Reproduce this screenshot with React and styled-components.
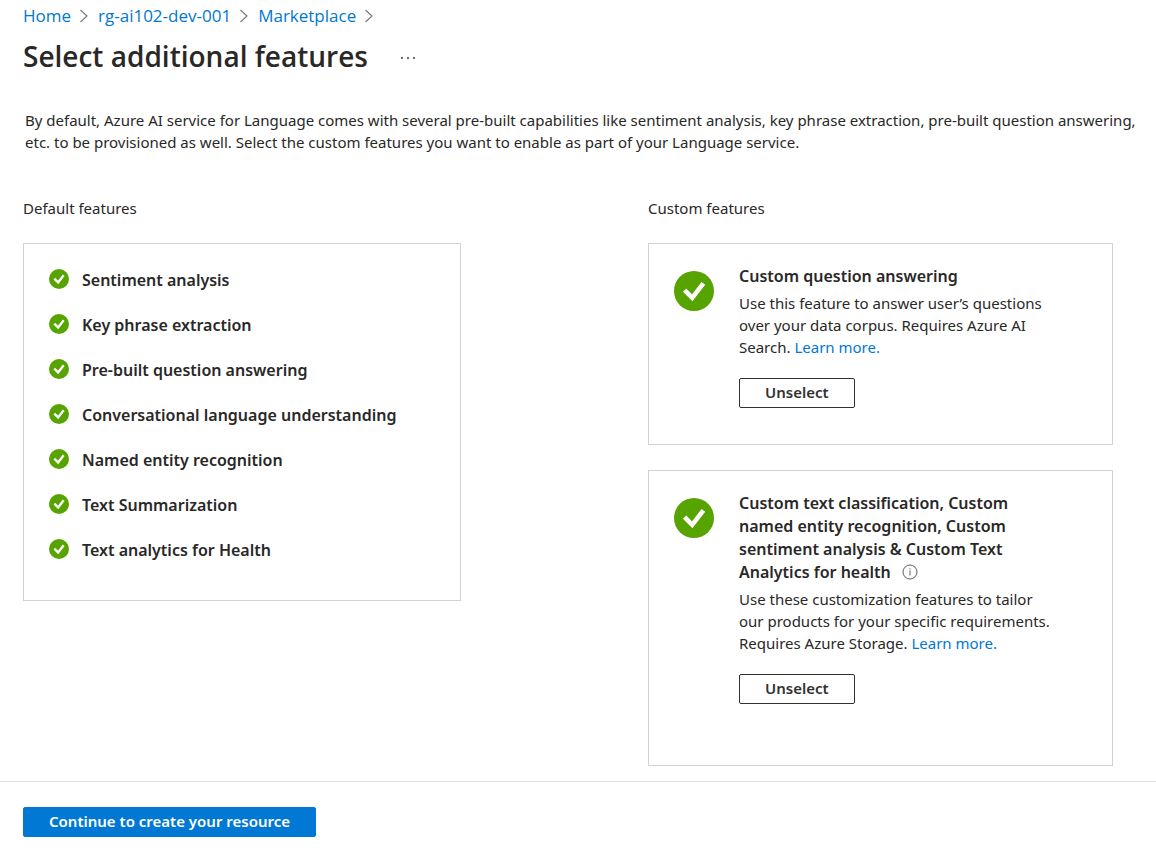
import React from "react";
import styled, { createGlobalStyle } from "styled-components";

const GlobalStyle = createGlobalStyle`
  *, *::before, *::after { box-sizing: border-box; }
  body {
    margin: 0;
    background: #fff;
    color: #292827;
    font-family: "Segoe UI", "Noto Sans", "Open Sans", sans-serif;
    font-size: 15px;
    line-height: 22px;
  }
  h1, h2, h3, p, ul, ol { margin: 0; padding: 0; }
  ul, ol { list-style: none; }
  svg { display: block; flex: none; }
`;

const headerFont = `"Segoe UI", "Open Sans", "Noto Sans", sans-serif`;

const Page = styled.div`
  display: flex;
  flex-direction: column;
  min-height: 100vh;
`;

const Content = styled.main`
  flex: 1;
  padding: 4px 0 15px 23px;
`;

const Link = styled.a`
  color: #0078d4;
  text-decoration: none;
  &:hover { text-decoration: underline; }
`;

const Breadcrumb = styled.ol`
  display: flex;
  font-family: ${headerFont};
  font-size: 17px;
  line-height: 24px;
`;

const Crumb = styled.li`
  display: flex;
  align-items: center;
  gap: 8px;
  margin-right: 9px;
`;

const TitleRow = styled.header`
  display: flex;
  align-items: center;
  gap: 32px;
  margin-top: 8px;
`;

const Title = styled.h1`
  font-family: ${headerFont};
  font-size: 28px;
  line-height: 40px;
  font-weight: 600;
`;

const MoreButton = styled.button`
  padding: 4px 0 0;
  border: 0;
  background: none;
  color: #292827;
  cursor: pointer;
`;

const Intro = styled.p`
  margin-top: 33px;
  padding: 0 2px;
`;

const Columns = styled.div`
  display: grid;
  grid-template-columns: 438fr 465fr;
  column-gap: 187px;
  align-items: start;
  margin-top: 44px;
  padding-right: 43px;
`;

const SectionTitle = styled.h2`
  font-size: 15px;
  line-height: 22px;
  font-weight: 400;
  margin-bottom: 24px;
`;

const FeatureList = styled.ul`
  display: flex;
  flex-direction: column;
  gap: 23px;
  padding: 25px 25px 39px;
  border: 1px solid #d2d2d2;
`;

const Feature = styled.li`
  display: flex;
  align-items: flex-start;
  gap: 13px;
  font-size: 16px;
  line-height: 22px;
  font-weight: 600;
`;

const CardStack = styled.div`
  display: grid;
  gap: 25px;
`;

const Card = styled.article`
  display: flex;
  align-items: flex-start;
  gap: 25px;
  padding: 21px 25px ${(p) => p.$bottom}px;
  border: 1px solid #d2d2d2;
`;

const CardIcon = styled.div`
  padding-top: 6px;
`;

const CardBody = styled.div`
  flex: 1;
  max-width: 318px;
`;

const CardTitle = styled.h3`
  max-width: 290px;
  font-size: 16px;
  line-height: 23px;
  font-weight: 600;
`;

const CardText = styled.p`
  margin: 4px 0 20px;
`;

const InfoMark = styled.span`
  display: inline-block;
  margin-left: 11px;
  vertical-align: -2px;
`;

const Button = styled.button`
  height: 30px;
  padding: 0 25px 2px;
  border: 1px solid ${(p) => (p.$primary ? "#0078d4" : "#323130")};
  border-radius: 2px;
  background: ${(p) => (p.$primary ? "#0078d4" : "#fff")};
  color: ${(p) => (p.$primary ? "#fff" : "#323130")};
  font: inherit;
  font-weight: 600;
  line-height: 20px;
  cursor: pointer;
`;

const Footer = styled.footer`
  padding: 25px 23px 15px;
  border-top: 1px solid #e0dfde;
`;

const Check = ({ size }) => (
  <svg width={size} height={size} viewBox="0 0 40 40" aria-hidden="true">
    <circle cx="20" cy="20" r="20" fill="#57a300" />
    <path
      d="M10.6 19.2 18.2 26.8 29.4 12.4"
      fill="none"
      stroke="#fff"
      strokeWidth="4.6"
    />
  </svg>
);

const Chevron = () => (
  <svg width="10" height="14" viewBox="0 0 10 14" aria-hidden="true">
    <path d="M1.5 1 8 7 1.5 13" fill="none" stroke="#797775" strokeWidth="1.1" />
  </svg>
);

const Info = () => (
  <svg width="16" height="16" viewBox="0 0 16 16" role="img" aria-label="More information">
    <circle cx="8" cy="8" r="7" fill="none" stroke="#605e5c" />
    <path d="M8 6.5V11.5M8 4.3V5.4" stroke="#605e5c" />
  </svg>
);

const crumbs = ["Home", "rg-ai102-dev-001", "Marketplace"];

const defaults = [
  "Sentiment analysis",
  "Key phrase extraction",
  "Pre-built question answering",
  "Conversational language understanding",
  "Named entity recognition",
  "Text Summarization",
  "Text analytics for Health",
];

const custom = [
  {
    title: "Custom question answering",
    text: "Use this feature to answer user’s questions over your data corpus. Requires Azure AI Search.",
    bottom: 36,
  },
  {
    title:
      "Custom text classification, Custom named entity recognition, Custom sentiment analysis & Custom Text Analytics for health",
    text: "Use these customization features to tailor our products for your specific requirements. Requires Azure Storage.",
    info: true,
    bottom: 61,
  },
];

export default function App() {
  return (
    <Page>
      <GlobalStyle />
      <Content>
        <nav aria-label="Breadcrumb">
          <Breadcrumb>
            {crumbs.map((c) => (
              <Crumb key={c}>
                <Link href="#">{c}</Link>
                <Chevron />
              </Crumb>
            ))}
          </Breadcrumb>
        </nav>
        <TitleRow>
          <Title>Select additional features</Title>
          <MoreButton type="button" aria-label="More actions">
            <svg width="16" height="4" viewBox="0 0 16 4" fill="currentColor" aria-hidden="true">
              <circle cx="2" cy="2" r="0.9" />
              <circle cx="8" cy="2" r="0.9" />
              <circle cx="14" cy="2" r="0.9" />
            </svg>
          </MoreButton>
        </TitleRow>
        <Intro>
          By default, Azure AI service for Language comes with several pre-built capabilities like sentiment analysis,
          key phrase extraction, pre-built question answering, etc. to be provisioned as well. Select the custom
          features you want to enable as part of your Language service.
        </Intro>
        <Columns>
          <section>
            <SectionTitle>Default features</SectionTitle>
            <FeatureList>
              {defaults.map((f) => (
                <Feature key={f}>
                  <Check size={20} />
                  {f}
                </Feature>
              ))}
            </FeatureList>
          </section>
          <section>
            <SectionTitle>Custom features</SectionTitle>
            <CardStack>
              {custom.map((c) => (
                <Card key={c.title} $bottom={c.bottom}>
                  <CardIcon>
                    <Check size={40} />
                  </CardIcon>
                  <CardBody>
                    <CardTitle>
                      {c.title}
                      {c.info && (
                        <InfoMark>
                          <Info />
                        </InfoMark>
                      )}
                    </CardTitle>
                    <CardText>
                      {c.text} <Link href="#">Learn more.</Link>
                    </CardText>
                    <Button type="button">Unselect</Button>
                  </CardBody>
                </Card>
              ))}
            </CardStack>
          </section>
        </Columns>
      </Content>
      <Footer>
        <Button type="button" $primary>
          Continue to create your resource
        </Button>
      </Footer>
    </Page>
  );
}
